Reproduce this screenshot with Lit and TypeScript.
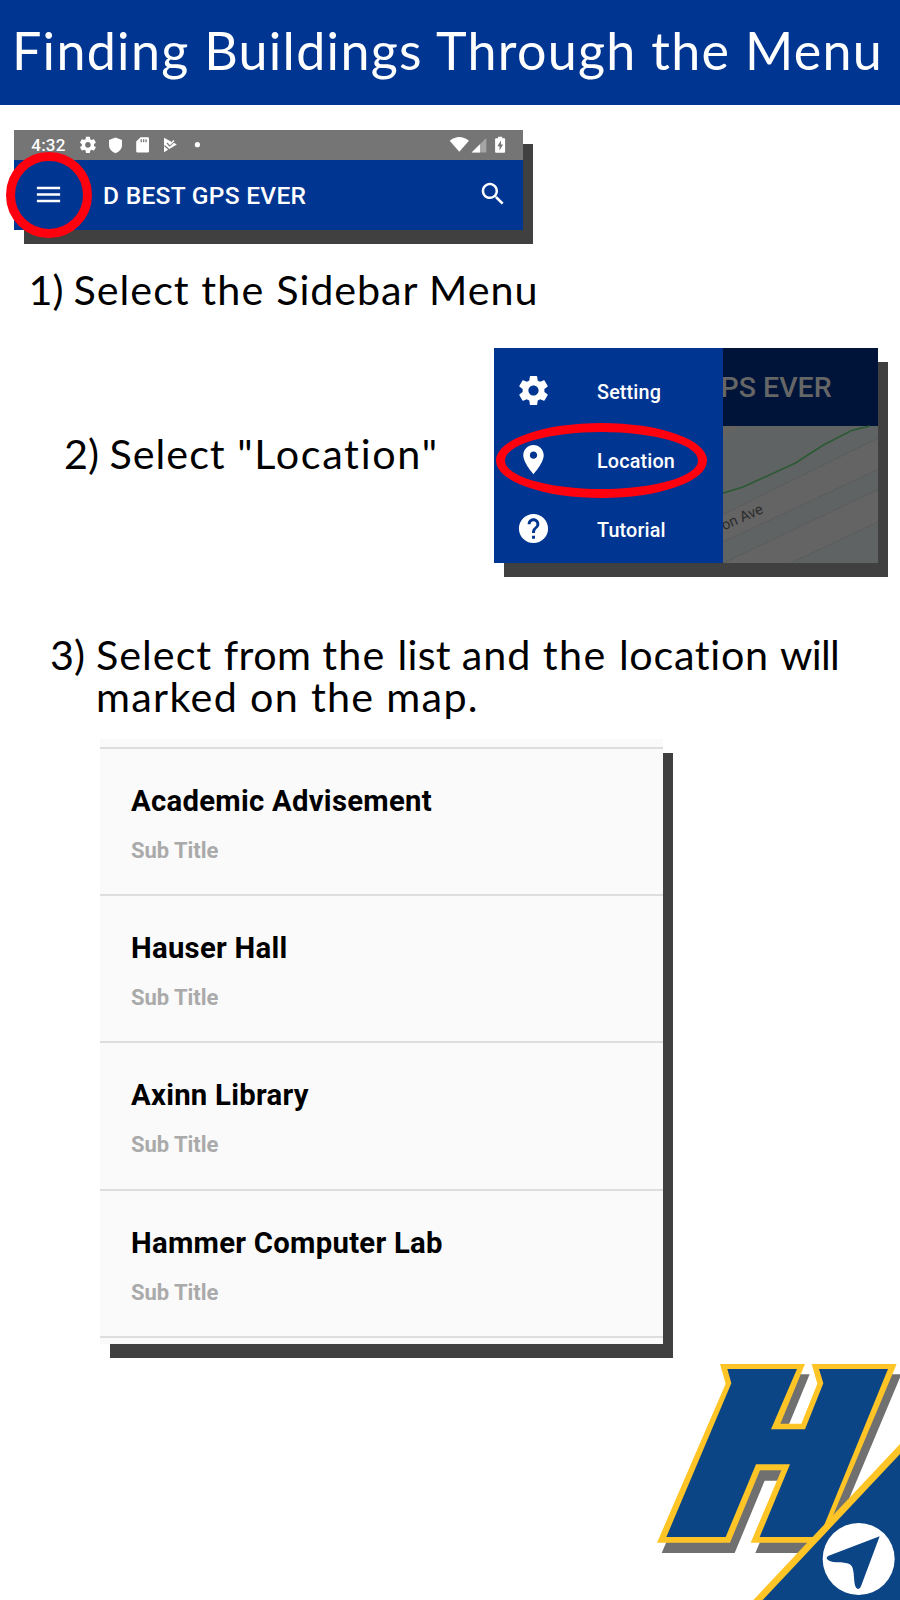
import { LitElement, html, svg, css } from "lit";
import { customElement, property } from "lit/decorators.js";
import { styleMap } from "lit/directives/style-map.js";

const GEAR =
  "M19.43 12.98c.04-.32.07-.64.07-.98s-.03-.66-.07-.98l2.11-1.65c.19-.15.24-.42.12-.64l-2-3.46c-.12-.22-.39-.3-.61-.22l-2.49 1c-.52-.4-1.08-.73-1.69-.98l-.38-2.65C14.46 2.18 14.25 2 14 2h-4c-.25 0-.46.18-.49.42l-.38 2.65c-.61.25-1.17.59-1.69.98l-2.49-1c-.23-.09-.49 0-.61.22l-2 3.46c-.13.22-.07.49.12.64l2.11 1.65c-.04.32-.07.65-.07.98s.03.66.07.98l-2.11 1.65c-.19.15-.24.42-.12.64l2 3.46c.12.22.39.3.61.22l2.49-1c.52.4 1.08.73 1.69.98l.38 2.65c.03.24.24.42.49.42h4c.25 0 .46-.18.49-.42l.38-2.65c.61-.25 1.17-.59 1.69-.98l2.49 1c.23.09.49 0 .61-.22l2-3.46c.12-.22.07-.49-.12-.64l-2.11-1.65zM12 15.5c-1.93 0-3.5-1.57-3.5-3.5s1.57-3.5 3.5-3.5 3.5 1.57 3.5 3.5-1.57 3.5-3.5 3.5z";
const PIN =
  "M12 2C8.13 2 5 5.13 5 9c0 5.25 7 13 7 13s7-7.75 7-13c0-3.87-3.13-7-7-7zm0 9.5c-1.38 0-2.5-1.12-2.5-2.5s1.12-2.5 2.5-2.5 2.5 1.12 2.5 2.5-1.12 2.5-2.5 2.5z";
const HELP =
  "M12 2C6.48 2 2 6.48 2 12s4.48 10 10 10 10-4.48 10-10S17.52 2 12 2zm1 17h-2v-2h2v2zm2.07-7.75l-.9.92C13.45 12.9 13 13.5 13 15h-2v-.5c0-1.1.45-2.1 1.17-2.83l1.24-1.26c.37-.36.59-.86.59-1.41 0-1.1-.9-2-2-2s-2 .9-2 2H8c0-2.21 1.79-4 4-4s4 1.79 4 4c0 .88-.36 1.68-.93 2.25z";
const MENU = "M3 18h18v-2H3v2zm0-5h18v-2H3v2zm0-7v2h18V6H3z";
const SEARCH =
  "M15.5 14h-.79l-.28-.27C15.41 12.59 16 11.11 16 9.5 16 5.91 13.09 3 9.5 3S3 5.91 3 9.5 5.91 16 9.5 16c1.61 0 3.09-.59 4.23-1.57l.27.28v.79l5 4.99L20.49 19l-4.99-5zm-6 0C7.01 14 5 11.99 5 9.5S7.01 5 9.5 5 14 7.01 14 9.5 11.99 14 9.5 14z";

const icon = (path: string, cls: string) =>
  html`<svg class=${cls} viewBox="0 0 24 24" fill="#fff"><path d=${path}></path></svg>`;

type Word = [text: string, tracking: number];

/** Sets a line of words, each with its own tracking in pixels. */
const line = (words: Word[]) =>
  words.map(([text, tracking]) => html`<span style=${styleMap({ letterSpacing: `${tracking}px` })}>${text + " "}</span>`);

@customElement("app-bar-shot")
class AppBarShot extends LitElement {
  static styles = css`
    :host { display: block; position: relative; width: 509px; height: 100px; box-shadow: 10px 14px 0 #404040; font-family: Roboto, sans-serif; font-weight: 500; color: #fff; }
    .status { display: block; width: 509px; height: 30px; background: #757575; }
    .clock { font-size: 17px; letter-spacing: 0.2px; }
    .bar { display: flex; align-items: center; height: 70px; background: #003591; padding: 0 15px 0 19px; box-sizing: border-box; }
    .menu { width: 31px; height: 31px; margin-bottom: 1px; }
    .name { font-size: 24.5px; line-height: 30px; margin-left: 39px; flex: 1; white-space: nowrap; padding-top: 1px; letter-spacing: 0.3px; }
    .search { width: 30px; height: 30px; margin-bottom: 3px; }
    .ring { position: absolute; left: -8px; top: 22px; width: 68px; height: 68px; border: 9px solid #ff000f; border-radius: 50%; }
  `;
  render() {
    return html`
      <svg class="status" viewBox="14 130 509 30" fill="#fff">
        <text class="clock" x="31.3" y="151.3">4:32</text>
        <path transform="translate(78.2 135.2) scale(.81)" d=${GEAR}></path>
        <path d="M115.5 137.6l6.5 2.4v5c0 4-2.8 6.8-6.5 8.2-3.7-1.4-6.5-4.2-6.5-8.2v-5z"></path>
        <path fill-rule="evenodd" d="M140.5 137.2h7.2q1.3 0 1.3 1.3v12.7q0 1.4-1.3 1.4h-10.2q-1.3 0-1.3-1.4v-9.6zM140.6 139.2v3h1.3v-3zM143 139.2v3h1.3v-3zM145.4 139.2v3h1.3v-3z"></path>
        <path d="M164 137.8L171 141.400 171.600 143 173.800 142.800 176.800 144.600 168.500 149.500 164 152.200z"></path>
        <path d="M167 143l2.700 2.800 6.300-6M164.500 145.500l4.600 4.300" fill="none" stroke="#757575" stroke-width="1.200"></path>
        <path d="M169.800 144.600L174 140.600" stroke="#fff" stroke-width="1.400"></path>
        <circle cx="197.4" cy="144.7" r="2.6"></circle>
        <path d="M449.7 140.7Q459.3 133.2 468.9 140.7L459.3 151.8z"></path>
        <path d="M471.6 152.6L486.3 138v14.6z" opacity=".35"></path>
        <path d="M471.6 152.6L480 144.2v8.4z"></path>
        <path fill-rule="evenodd" d="M498 136.8h4.2v1.5h2q.9 0 .9 1v12.4q0 1-.9 1h-8.2q-.9 0-.9-1v-12.4q0-1 .9-1h2zM501 140.5l-3.7 5.7h2.2v4.2l3.6-5.8h-2.1z"></path>
      </svg>
      <div class="bar">
        ${icon(MENU, "menu")}
        <div class="name">D BEST GPS EVER</div>
        ${icon(SEARCH, "search")}
      </div>
      <div class="ring"></div>
    `;
  }
}

@customElement("drawer-shot")
class DrawerShot extends LitElement {
  static styles = css`
    :host { display: flex; position: relative; width: 384px; height: 215px; box-shadow: 10px 14px 0 #404040; font-family: Roboto, sans-serif; font-weight: 500; }
    .drawer { width: 229px; box-sizing: border-box; padding-top: 8.5px; background: #003591; color: #fff; }
    .row { display: flex; align-items: center; height: 68.9px; padding-left: 22px; }
    .glyph { width: 35px; height: 35px; margin-right: 46px; }
    .label { font-size: 19.8px; line-height: 24px; padding-top: 4px; letter-spacing: 0.15px; }
    .behind { display: block; width: 155px; height: 215px; }
    .app { font-size: 28.5px; }
    .road { font-size: 14.6px; font-weight: 400; }
    .ring { position: absolute; left: 2px; top: 75px; width: 193px; height: 56.5px; border: 9px solid #ff000f; border-radius: 50%; }
  `;
  render() {
    const rows = [
      [GEAR, "Setting"],
      [PIN, "Location"],
      [HELP, "Tutorial"],
    ];
    return html`
      <div class="drawer">
        ${rows.map(
          ([path, label]) => html`<div class="row">${icon(path, "glyph")}<span class="label">${label}</span></div>`
        )}
      </div>
      <svg class="behind" viewBox="723 348 155 215">
        <rect x="723" y="348" width="155" height="78" fill="#001439"></rect>
        <text class="app" x="720.5" y="396.7" fill="#666">PS EVER</text>
        <rect x="723" y="426" width="155" height="137" fill="#606363"></rect>
        <path d="M723 426h18L723 437z" fill="#656360"></path>
        <g stroke="#5b5c5c" stroke-width="1">
          <path d="M722 515L879 437.5V469L722 542.5z" fill="#646464"></path>
          <path d="M715 567L879 489V521.5L780 568z" fill="#646464"></path>
        </g>
        <path d="M722 493.5L743 487 795.5 463 823 445.3 852 430.3 870 426" fill="none" stroke="#2c5a34" stroke-width="1.7"></path>
        <text class="road" transform="translate(724 530.5) rotate(-24)" x="0" y="0" fill="#2c2c2c">on Ave</text>
      </svg>
      <div class="ring"></div>
    `;
  }
}

@customElement("building-list")
class BuildingList extends LitElement {
  @property({ attribute: false }) names: string[] = [];
  static styles = css`
    :host { display: block; box-sizing: border-box; width: 563px; height: 605px; padding-top: 8px; background: #fafafa; box-shadow: 10px 14px 0 #404040; font-family: Roboto, sans-serif; font-weight: 700; }
    .item { box-sizing: border-box; height: 147.2px; border-top: 2px solid #dedede; padding: 34px 0 0 31px; white-space: nowrap; }
    .name { font-size: 29.3px; line-height: 36px; color: #000; letter-spacing: 0.27px; }
    .sub { font-size: 22px; line-height: 28px; margin-top: 18px; color: #aaa; letter-spacing: -0.05px; }
    .end { height: 2px; background: #dedede; }
  `;
  render() {
    return html`
      ${this.names.map(
        (n) => html`<div class="item"><div class="name">${n}</div><div class="sub">Sub Title</div></div>`
      )}
      <div class="end"></div>
    `;
  }
}

@customElement("h-logo")
class HLogo extends LitElement {
  static styles = css`
    :host { display: block; width: 260px; height: 260px; }
    .art { display: block; width: 260px; height: 260px; }
  `;
  render() {
    const outer =
      "240,72 495,72 421,251 484,251 532,131 515,72 770,72 545,608 332,608 424,391 360,391 270,608 51,608 257,131";
    const inner =
      "262,87 471,87 393,268 495,268 550,130 537,87 744,87 538,591 359,591 450,373 348,373 257,591 79,591 274,130";
    return html`
      <svg class="art" viewBox="0 0 780 780">
        ${svg`
          <polygon points=${outer} transform="translate(14 31)" fill="#707070"></polygon>
          <polygon points=${outer} fill="#ffc426"></polygon>
          <polygon points=${inner} fill="#0b4585"></polygon>
          <polygon points="780,312 340,780 780,780" fill="#ffc426"></polygon>
          <polygon points="780,342 368,780 780,780" fill="#0b4585"></polygon>
          <circle cx="656" cy="657" r="108" fill="#fff"></circle>
          <path d="M719 589L566 647Q558 651 561 657Q567 666 590 667C625 669 638 668 641 700C643 724 643 747 655 747Q660 747 663 739z" fill="#0b4585"></path>
        `}
      </svg>
    `;
  }
}

@customElement("app-root")
class AppRoot extends LitElement {
  static styles = css`
    :host { display: flex; flex-direction: column; width: 900px; height: 1600px; overflow: hidden; background: #fff; color: #000; font-family: Lato, sans-serif; }
    .title { box-sizing: border-box; height: 105px; padding: 0 0 4px 12px; background: #003591; color: #fff; font-size: 52px; line-height: 101px; letter-spacing: 1.3px; white-space: nowrap; }
    .shot1 { margin: 25px 0 0 14px; }
    .step { display: flex; font-size: 41.3px; line-height: 42px; white-space: nowrap; }
    .one { margin: 38px 0 0 28.5px; }
    .two { width: 430px; margin-top: 84px; }
    .row { display: flex; height: 215px; margin-top: 38px; padding-left: 64px; }
    .three { margin: 69.5px 0 0 50px; }
    .num { width: 46px; }
    .one .num { width: 45px; }
    .two .num { width: 45.5px; }
    .list { margin: 22.5px 0 0 100px; }
    .foot { display: flex; justify-content: flex-end; margin-top: -4px; }
  `;
  render() {
    return html`
      <div class="title">Finding Buildings Through the Menu</div>
      <app-bar-shot class="shot1"></app-bar-shot>
      <div class="step one">
        <span class="num">1)</span>
        <div>${line([["Select", 1], ["the", 1.2], ["Sidebar", 0.9], ["Menu", 1]])}</div>
      </div>
      <div class="row">
        <div class="step two">
          <span class="num">2)</span>
          <div>${line([["Select", 1], ['"Location"', 1.7]])}</div>
        </div>
        <drawer-shot></drawer-shot>
      </div>
      <div class="step three">
        <span class="num">3)</span>
        <div>
          <div>
            ${line([["Select", 1], ["from", 0.4], ["the", 1.2], ["list", 0.3], ["and", 0.9], ["the", 1.5], ["location", 0.7], ["will", -0.7]])}
          </div>
          <div>${line([["marked", 1.3], ["on", 1.3], ["the", 1.3], ["map.", 1.3]])}</div>
        </div>
      </div>
      <building-list
        class="list"
        .names=${["Academic Advisement", "Hauser Hall", "Axinn Library", "Hammer Computer Lab"]}
      ></building-list>
      <div class="foot"><h-logo></h-logo></div>
    `;
  }
}
